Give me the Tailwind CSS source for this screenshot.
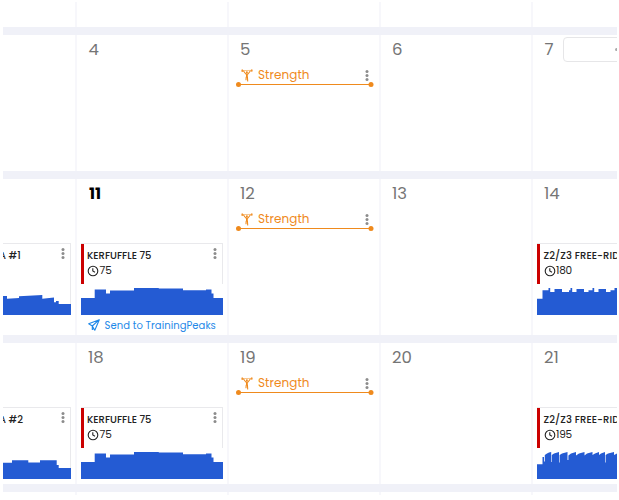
<!DOCTYPE html>
<html lang="en">
<head>
    <meta charset="UTF-8">
    <meta name="viewport" content="width=device-width, initial-scale=1.0">
    <title>Training Calendar</title>
    <script src="https://cdn.jsdelivr.net/npm/@tailwindcss/browser@4"></script>
</head>
<body class="bg-white overflow-hidden font-['Poppins','Inter',sans-serif] text-[#757575]">
    <!-- shared icons -->
    <svg class="hidden">
        <symbol id="dots" viewBox="0 0 4 11">
            <g fill="#8c8c8c"><circle cx="2" cy="1.6" r="1.5"/><circle cx="2" cy="5.5" r="1.5"/><circle cx="2" cy="9.4" r="1.5"/></g>
        </symbol>
        <symbol id="lifter" viewBox="0 0 12 13">
            <g fill="none" stroke="#ef8a1d" stroke-linecap="round" stroke-linejoin="round">
                <path stroke-width=".5" d="M1 1.6 L11 1.4"/>
                <path stroke-width="1.3" d="M1.2 1 V2.4 M10.8 .8 V2.2"/>
                <path stroke-width="1.1" d="M2.5 2 L4.8 5 H7 L9.3 2"/>
                <path stroke-width="1.8" d="M5.9 5.5 V7.6"/>
                <path stroke-width="1.1" d="M5.2 8 L5 10.8 M6.4 8 L6.7 12"/>
            </g>
            <circle cx="5.9" cy="3.2" r="1" fill="#ef8a1d"/>
        </symbol>
        <symbol id="clock" viewBox="0 0 12 12">
            <g fill="none" stroke="#222" stroke-width="1.1"><circle cx="6" cy="6" r="4.8"/><path d="M5.8 3.2 V6 L8 7.2"/></g>
        </symbol>
        <symbol id="kerfuffle" viewBox="0 0 142 30">
            <path fill="#245bd3" d="M0 13H13.7V4.5H25V8.5H29V5.5H53V3H77.5L78 3.6H102V5.3H125V4.5H130.5V8.5H132.5V13H142V30H0Z"/>
        </symbol>
    </svg>

    <main class="ml-[3px] mt-[2px] w-[614px] h-[493px] overflow-hidden">
        <div class="grid grid-cols-[74px_152px_152px_152px_84px] h-[25px] *:border-r-2 *:border-[#f7f7fb]">
            <div></div><div></div><div></div><div></div><div class="border-r-0!"></div>
        </div>
        <div class="h-2 bg-[#f0f1f8]"></div>

        <!-- 4 - 7 -->
        <div class="grid grid-cols-[74px_152px_152px_152px_84px] h-[136px] *:border-r-2 *:border-[#f7f7fb]">
            <div></div>
            <div><p class="pl-[11.5px] pt-[3px] h-8 text-[16.5px] leading-[24px]">4</p></div>
            <div>
                <p class="pl-[11px] pt-[3px] h-8 text-[16.5px] leading-[24px]">5</p>
                <div class="flex items-center h-4 pl-3 pr-[10.5px] text-[#ef8a1d]">
                    <svg class="w-3 h-[13px]"><use href="#lifter"/></svg>
                    <span class="ml-[5px] text-[12px] tracking-[0.05px]">Strength</span>
                    <svg class="ml-auto w-1 h-[11px]"><use href="#dots"/></svg>
                </div>
                <svg class="ml-[5.5px] w-[140px] h-[6px] -mt-[1px]"><path d="M3 2.5H136" stroke="#ef8a1d"/><circle cx="3.5" cy="2.5" r="2.5" fill="#ef8a1d"/><circle cx="136" cy="2.5" r="2.5" fill="#ef8a1d"/></svg>
            </div>
            <div><p class="pl-[11px] pt-[3px] h-8 text-[16.5px] leading-[24px]">6</p></div>
            <div class="border-r-0! flex overflow-hidden">
                <p class="pl-[11.5px] pt-[3px] w-[30px] shrink-0 text-[16.5px] leading-[24px]">7</p>
                <div class="mt-[2px] w-[110px] h-[25px] shrink-0 rounded-[4px] border border-[#e6e6e8] flex items-center pl-[51px]"><i class="size-[3px] rounded-full bg-[#aaa]"></i></div>
            </div>
        </div>
        <div class="h-2 bg-[#f0f1f8]"></div>

        <!-- 11 - 14 -->
        <div class="grid grid-cols-[74px_152px_152px_152px_84px] h-[156px] *:border-r-2 *:border-[#f7f7fb]">
            <div class="pt-16">
                <div class="flex flex-col w-[68px] h-[72px] border-t border-r border-[#e9e9ec]">
                    <div class="flex h-[41px] pt-1 pr-[5px]">
                        <p class="text-[10px] leading-[15px] font-medium text-[#222] -ml-[4px]">A #1</p>
                        <svg class="ml-auto w-1 h-[11px]"><use href="#dots"/></svg>
                    </div>
                    <svg class="w-[68px] h-[30px]"><path fill="#245bd3" d="M0 11H4V13.7L16 13V11.3L39.3 10V13.7L51 12.5V17.3H53V16H55.7V19H68V30H0Z"/></svg>
                </div>
            </div>
            <div>
                <p class="pl-[12px] pt-[3px] h-16 text-[16px] leading-[24px] font-bold text-black">11</p>
                <div class="ml-1 w-[142px] h-[72px] border-t border-[#e9e9ec]">
                    <div class="flex h-[40px] mb-px border-l-3 border-[#cb0000] pl-[3px] pr-[6px] pt-1 text-[#222] shadow-[inset_-1px_0_#e9e9ec]">
                        <div>
                            <p class="text-[10px] leading-[15px] font-medium">KERFUFFLE 75</p>
                            <p class="flex items-center gap-[.5px] text-[10.5px] leading-[15px]"><svg class="size-3"><use href="#clock"/></svg>75</p>
                        </div>
                        <svg class="ml-auto w-1 h-[11px]"><use href="#dots"/></svg>
                    </div>
                    <svg class="w-[142px] h-[30px]"><use href="#kerfuffle"/></svg>
                </div>
                <div class="flex items-center h-5 pl-[11px] text-[10px] text-[#1e88e8]">
                    <svg class="w-3 h-3" viewBox="0 0 12 12" fill="none" stroke="#1e88e8" stroke-width="1.1" stroke-linejoin="round"><path d="M11.3 .7 L.7 4.8 L4.3 7 L6.8 11.2 Z M11.3 .7 L4.3 7 V10.5 L5.6 9.2"/></svg>
                    <span class="ml-[4.5px] tracking-[0.06px] whitespace-nowrap">Send to TrainingPeaks</span>
                </div>
            </div>
            <div>
                <p class="pl-[11px] pt-[3px] h-8 text-[16.5px] leading-[24px]">12</p>
                <div class="flex items-center h-4 pl-3 pr-[10.5px] text-[#ef8a1d]">
                    <svg class="w-3 h-[13px]"><use href="#lifter"/></svg>
                    <span class="ml-[5px] text-[12px] tracking-[0.05px]">Strength</span>
                    <svg class="ml-auto w-1 h-[11px]"><use href="#dots"/></svg>
                </div>
                <svg class="ml-[5.5px] w-[140px] h-[6px] -mt-[1px]"><path d="M3 2.5H136" stroke="#ef8a1d"/><circle cx="3.5" cy="2.5" r="2.5" fill="#ef8a1d"/><circle cx="136" cy="2.5" r="2.5" fill="#ef8a1d"/></svg>
            </div>
            <div><p class="pl-[11px] pt-[3px] h-8 text-[16.5px] leading-[24px]">13</p></div>
            <div class="border-r-0! overflow-hidden">
                <p class="pl-[11px] pt-[3px] h-16 text-[16.5px] leading-[24px]">14</p>
                <div class="ml-1 w-[142px] h-[72px] border-t border-[#e9e9ec]">
                    <div class="h-[40px] mb-px border-l-3 border-[#cb0000] pl-[3.5px] pt-1 text-[#222]">
                        <p class="text-[10px] leading-[15px] font-medium tracking-[0.1px] whitespace-nowrap">Z2/Z3 FREE-RIDE</p>
                        <p class="flex items-center gap-[.5px] text-[10.5px] leading-[15px] tracking-[-0.2px]"><svg class="size-3"><use href="#clock"/></svg>180</p>
                    </div>
                    <svg class="w-20 h-[30px]"><path fill="#245bd3" d="M0 13.7H5.5V5.3H11.5V3H13.2V7H17.5V4H25V7H29.5V8V7H32V5.3H33.5V3H35.2V7H39.5V4H47V7H51.5V5.3H55.5V3H57.2V7H61.5V4H69V7H73.5V5.3H77.5V3H80V30H0Z"/></svg>
                </div>
            </div>
        </div>
        <div class="h-2 bg-[#f0f1f8]"></div>

        <!-- 18 - 21 -->
        <div class="grid grid-cols-[74px_152px_152px_152px_84px] h-[141px] *:border-r-2 *:border-[#f7f7fb]">
            <div class="pt-16">
                <div class="flex flex-col w-[68px] h-[72px] border-t border-r border-[#e9e9ec]">
                    <div class="flex h-[41px] pt-1 pr-[5px]">
                        <p class="text-[10px] leading-[15px] font-medium text-[#222] -ml-[4px]">A #2</p>
                        <svg class="ml-auto w-1 h-[11px]"><use href="#dots"/></svg>
                    </div>
                    <svg class="w-[68px] h-[30px]"><path fill="#245bd3" d="M0 13.7H9V11.3H25.3V13.5H37V11.3H53.7V16H55.7V19H68V30H0Z"/></svg>
                </div>
            </div>
            <div>
                <p class="pl-[11px] pt-[3px] h-16 text-[16.5px] leading-[24px]">18</p>
                <div class="ml-1 w-[142px] h-[72px] border-t border-[#e9e9ec]">
                    <div class="flex h-[40px] mb-px border-l-3 border-[#cb0000] pl-[3px] pr-[6px] pt-1 text-[#222] shadow-[inset_-1px_0_#e9e9ec]">
                        <div>
                            <p class="text-[10px] leading-[15px] font-medium">KERFUFFLE 75</p>
                            <p class="flex items-center gap-[.5px] text-[10.5px] leading-[15px]"><svg class="size-3"><use href="#clock"/></svg>75</p>
                        </div>
                        <svg class="ml-auto w-1 h-[11px]"><use href="#dots"/></svg>
                    </div>
                    <svg class="w-[142px] h-[30px]"><use href="#kerfuffle"/></svg>
                </div>
            </div>
            <div>
                <p class="pl-[11px] pt-[3px] h-8 text-[16.5px] leading-[24px]">19</p>
                <div class="flex items-center h-4 pl-3 pr-[10.5px] text-[#ef8a1d]">
                    <svg class="w-3 h-[13px]"><use href="#lifter"/></svg>
                    <span class="ml-[5px] text-[12px] tracking-[0.05px]">Strength</span>
                    <svg class="ml-auto w-1 h-[11px]"><use href="#dots"/></svg>
                </div>
                <svg class="ml-[5.5px] w-[140px] h-[6px] -mt-[1px]"><path d="M3 2.5H136" stroke="#ef8a1d"/><circle cx="3.5" cy="2.5" r="2.5" fill="#ef8a1d"/><circle cx="136" cy="2.5" r="2.5" fill="#ef8a1d"/></svg>
            </div>
            <div><p class="pl-[11px] pt-[3px] h-8 text-[16.5px] leading-[24px]">20</p></div>
            <div class="border-r-0! overflow-hidden">
                <p class="pl-[11px] pt-[3px] h-16 text-[16.5px] leading-[24px]">21</p>
                <div class="ml-1 w-[142px] h-[72px] border-t border-[#e9e9ec]">
                    <div class="h-[40px] mb-px border-l-3 border-[#cb0000] pl-[3.5px] pt-1 text-[#222]">
                        <p class="text-[10px] leading-[15px] font-medium tracking-[0.1px] whitespace-nowrap">Z2/Z3 FREE-RIDE</p>
                        <p class="flex items-center gap-[.5px] text-[10.5px] leading-[15px] tracking-[-0.2px]"><svg class="size-3"><use href="#clock"/></svg>195</p>
                    </div>
                    <svg class="w-20 h-[30px]"><path fill="#245bd3" d="M0 15.3H5.5V8H7V12.5H7.8V6L10 4.5L12 3.5L14.2 3V13H14.8V6L17 4.5L22 3V13.5H22.6V6L25 4.5L30.5 3V11H31.4V6.5L34 4.5L39 3V6.5L42 4.5L47.5 3V6.5L50 4.5L55.5 3V6L58 4.5L62 3V6L64 4.5L68 3V13.5H68.6V6L71 4.5L77 3V6L80 4.5V30H0Z"/></svg>
                </div>
            </div>
        </div>
        <div class="h-2 bg-[#f0f1f8]"></div>
        <div class="grid grid-cols-[74px_152px_152px_152px_84px] h-[3px] *:border-r-2 *:border-[#f7f7fb]">
            <div></div><div></div><div></div><div></div><div class="border-r-0!"></div>
        </div>
    </main>
</body>
</html>
